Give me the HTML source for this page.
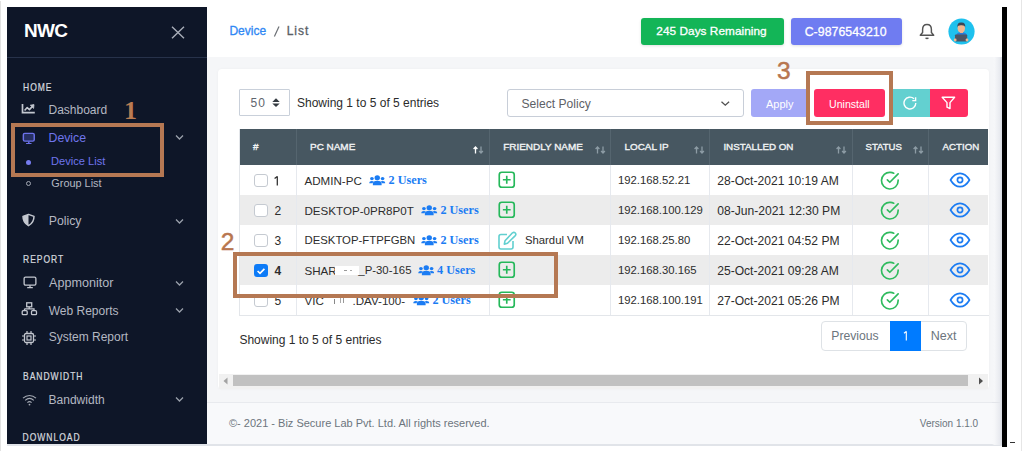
<!DOCTYPE html>
<html><head><meta charset="utf-8">
<style>
*{box-sizing:border-box;margin:0;padding:0}
html,body{width:1024px;height:451px;overflow:hidden;background:#fff;font-family:"Liberation Sans",sans-serif}
.a{position:absolute}
.t{position:absolute;white-space:nowrap;line-height:1}
#edgeL{left:0;top:1px;width:1px;height:450px;background:#e2e2e2}
#edgeR{left:1021px;top:0;width:1px;height:451px;background:#e6e6e6}
#side{left:7px;top:7px;width:200px;height:437px;background:#0e1628}
#hdr{left:207px;top:7px;width:795px;height:50px;background:#fff}
#content{left:207px;top:57px;width:795px;height:345px;background:#f5f6f8}
#foot{left:207px;top:402px;width:795px;height:43px;background:#f8f9fb;border-top:1px solid #e8eaee}
#bar{left:1002px;top:7px;width:5px;height:440px;background:#000}
#dash{left:1010px;top:442px;width:5px;height:1px;background:#333}
.sb{color:#b4b8c2;font-size:12.5px}
.sec{color:#d4d7de;font-size:8.5px;font-weight:normal;letter-spacing:1px;-webkit-text-stroke:0.2px #d4d7de;transform:scaleY(1.2);transform-origin:0 50%}
.brown{border:4.5px solid #b57853}
.btn{position:absolute;border-radius:3px;color:#fff;text-align:center}
.hd{color:#f2f4f5;font-size:10.5px;font-weight:normal;-webkit-text-stroke:0.35px #f2f4f5}
.cell{color:#2d2d2d;font-size:12px}
</style></head><body>
<div class="a" id="edgeL"></div>
<div class="a" id="edgeR"></div>

<!-- SIDEBAR -->
<div class="a" id="side"></div>

<div class="t" style="left:24px;top:20.6px;font-size:19px;font-weight:bold;color:#fff;letter-spacing:-0.7px">NWC</div>
<svg class="a" style="left:170.5px;top:26px" width="14" height="13" viewBox="0 0 14 13"><path d="M1 0.8L13 12.2M13 0.8L1 12.2" stroke="#a9aeb9" stroke-width="1.4" fill="none"/></svg>
<div class="a" style="left:7px;top:56.5px;width:200px;height:1px;background:#27324a"></div>
<div class="t sec" style="left:23px;top:83px">HOME</div>
<svg class="a" style="left:21px;top:102px" width="15" height="13" viewBox="0 0 15 13"><path d="M1.5 2V10.6H13.8" stroke="#c3c7cf" stroke-width="1.7" fill="none"/><path d="M3.6 8.6L6.2 5.6L8.4 7.6L11.2 4.6" stroke="#c3c7cf" stroke-width="1.6" fill="none" stroke-linejoin="round"/><path d="M9.3 3.2L13 2.6L12.6 6.4Z" fill="#c3c7cf" stroke="#c3c7cf" stroke-width="0.8" stroke-linejoin="round"/></svg>
<div class="t sb" style="left:48.5px;top:103.7px;font-size:12px">Dashboard</div>
<div class="t" style="left:124px;top:97.5px;font:bold 26px/1 'Liberation Serif',serif;color:#b97b52">1</div>

<svg class="a" style="left:22.3px;top:131.5px" width="14.5" height="12.8" viewBox="0 0 16 14" preserveAspectRatio="none"><rect x="1.5" y="1.5" width="12" height="8.5" rx="1.5" fill="#273062" stroke="#6c72ea" stroke-width="1.6"/><path d="M7.5 10.5V12.5M4.5 12.8H10.5" stroke="#6c72ea" stroke-width="1.6"/></svg>
<div class="t" style="left:48.5px;top:132.2px;font-size:12.3px;color:#6f75ec">Device</div>
<svg class="a" style="left:175px;top:134px" width="9" height="7" viewBox="0 0 9 7"><path d="M1 1.5L4.5 5L8 1.5" stroke="#9aa0ab" stroke-width="1.3" fill="none"/></svg>
<div class="a" style="left:26px;top:160px;width:5px;height:5px;border-radius:50%;background:#767cf0"></div>
<div class="t" style="left:51px;top:156.2px;font-size:11.1px;color:#6f75ec">Device List</div>
<div class="a" style="left:26px;top:181.4px;width:5px;height:5px;border-radius:50%;border:1px solid #a2a7b2"></div>
<div class="t sb" style="left:51.3px;top:177.8px;font-size:10.9px">Group List</div>

<svg class="a" style="left:21px;top:212.6px" width="15" height="14" viewBox="0 0 15 15" preserveAspectRatio="none"><path d="M7.5 1.5L13 3.6C13 8.5 11.2 11.6 7.5 13.6C3.8 11.6 2 8.5 2 3.6Z" stroke="#c3c7cf" stroke-width="1.5" fill="none" stroke-linejoin="round"/><path d="M7.5 1.5L2 3.6C2 8.5 3.8 11.6 7.5 13.6Z" fill="#c3c7cf"/></svg>
<div class="t sb" style="left:48.7px;top:215px;font-size:12.3px">Policy</div>
<svg class="a" style="left:175px;top:218px" width="9" height="7" viewBox="0 0 9 7"><path d="M1 1.5L4.5 5L8 1.5" stroke="#9aa0ab" stroke-width="1.3" fill="none"/></svg>

<div class="t sec" style="left:23px;top:255.1px">REPORT</div>
<svg class="a" style="left:22.5px;top:275.8px" width="14" height="12.8" viewBox="0 0 15 14" preserveAspectRatio="none"><rect x="1.2" y="1.2" width="12.6" height="8.8" rx="1.5" stroke="#c3c7cf" stroke-width="1.4" fill="none"/><path d="M7.5 10.2V12.5M4.5 12.7H10.5" stroke="#c3c7cf" stroke-width="1.4"/></svg>
<div class="t sb" style="left:49px;top:276.6px;font-size:12.6px">Appmonitor</div>
<svg class="a" style="left:175px;top:280px" width="9" height="7" viewBox="0 0 9 7"><path d="M1 1.5L4.5 5L8 1.5" stroke="#9aa0ab" stroke-width="1.3" fill="none"/></svg>

<svg class="a" style="left:21px;top:302px" width="17" height="14" viewBox="0 0 17 14"><rect x="5.7" y="0.8" width="5" height="4" stroke="#c3c7cf" stroke-width="1.3" fill="none"/><path d="M8.2 4.8V6.8M3.5 6.8H13V8.5M3.5 6.8V8.5" stroke="#c3c7cf" stroke-width="1.3" fill="none"/><rect x="1.2" y="8.7" width="5" height="4" rx="1" stroke="#c3c7cf" stroke-width="1.3" fill="none"/><rect x="10.5" y="8.7" width="5" height="4" rx="1" stroke="#c3c7cf" stroke-width="1.3" fill="none"/></svg>
<div class="t sb" style="left:48.7px;top:304.5px;font-size:12px">Web Reports</div>
<svg class="a" style="left:175px;top:307px" width="9" height="7" viewBox="0 0 9 7"><path d="M1 1.5L4.5 5L8 1.5" stroke="#9aa0ab" stroke-width="1.3" fill="none"/></svg>

<svg class="a" style="left:21px;top:329.5px" width="16" height="16" viewBox="0 0 16 16"><rect x="3.5" y="3.5" width="9" height="9" rx="1.5" stroke="#c3c7cf" stroke-width="1.3" fill="none"/><rect x="6" y="6" width="4" height="4" stroke="#c3c7cf" stroke-width="1.2" fill="none"/><path d="M6 1V3.5M10 1V3.5M6 12.5V15M10 12.5V15M1 6H3.5M1 10H3.5M12.5 6H15M12.5 10H15" stroke="#c3c7cf" stroke-width="1.2"/></svg>
<div class="t sb" style="left:48.7px;top:331px;font-size:12px">System Report</div>

<div class="t sec" style="left:23px;top:371.8px">BANDWIDTH</div>
<svg class="a" style="left:22px;top:393.5px" width="15" height="12" viewBox="0 0 15 12"><path d="M1 4.2C4.8 0.6 10.2 0.6 14 4.2M3.2 6.4C5.8 4 9.2 4 11.8 6.4M5.4 8.6C6.7 7.5 8.3 7.5 9.6 8.6" stroke="#a3a8b2" stroke-width="1.15" fill="none"/><circle cx="7.5" cy="10.6" r="0.9" fill="#a3a8b2"/></svg>
<div class="t sb" style="left:48.6px;top:393.8px;font-size:12px">Bandwidth</div>
<svg class="a" style="left:175px;top:396px" width="9" height="7" viewBox="0 0 9 7"><path d="M1 1.5L4.5 5L8 1.5" stroke="#9aa0ab" stroke-width="1.3" fill="none"/></svg>
<div class="t sec" style="left:22.6px;top:433.3px">DOWNLOAD</div>

<div class="a brown" style="left:10.6px;top:123px;width:153px;height:53.5px"></div>


<!-- HEADER -->
<div class="a" id="hdr"></div>
<div class="a" id="content"></div>
<div class="a" id="foot"></div>

<div class="t" style="left:229.4px;top:25px;font-size:12px;color:#2f88f4;-webkit-text-stroke:0.3px #2f88f4">Device</div>
<svg class="a" style="left:272px;top:25px" width="9" height="13" viewBox="0 0 9 13"><path d="M7 1.6L2.4 11.6" stroke="#6c7075" stroke-width="1.2"/></svg>
<div class="t" style="left:286.7px;top:25px;font-size:12px;color:#5a6066;-webkit-text-stroke:0.3px #5a6066;letter-spacing:1px">List</div>

<div class="btn" style="left:641px;top:18px;width:143px;height:26.5px;background:#13b557;box-shadow:0 1px 3px rgba(0,0,0,.12)"></div>
<div class="t" style="left:656.3px;top:26.2px;font-size:11.8px;color:#fff;-webkit-text-stroke:0.3px #fff;letter-spacing:0.05px">245 Days Remaining</div>
<div class="btn" style="left:791px;top:18px;width:111px;height:26.5px;background:#6f7cf1;box-shadow:0 1px 3px rgba(0,0,0,.12)"></div>
<div class="t" style="left:804.7px;top:26px;font-size:12.3px;color:#fff;-webkit-text-stroke:0.3px #fff;letter-spacing:0.3px;letter-spacing:0.05px">C-9876543210</div>

<svg class="a" style="left:918px;top:22px" width="18" height="19" viewBox="0 0 18 19"><path d="M2.3 13.2L4.6 10.6V7.6C4.6 4.4 6.4 2.4 9 2.4C11.6 2.4 13.4 4.4 13.4 7.6V10.6L15.7 13.2Z" stroke="#555" stroke-width="1.45" fill="none" stroke-linejoin="round"/><path d="M7.6 15.8Q9 17.3 10.4 15.8" stroke="#555" stroke-width="1.4" fill="none"/></svg>
<svg class="a" style="left:947.5px;top:18.3px" width="27" height="27" viewBox="0 0 27 27">
<defs><clipPath id="cc"><circle cx="13.5" cy="13.5" r="13.1"/></clipPath></defs>
<circle cx="13.5" cy="13.5" r="13.1" fill="#1ec1ee"/>
<g clip-path="url(#cc)">
<path d="M8 18Q8 14.5 13.5 14.2Q19 14.5 19 18V20H8Z" fill="#2a7bd6"/>
<rect x="11.9" y="12" width="3.2" height="3" fill="#eeb08a"/>
<ellipse cx="13.3" cy="10.2" rx="3.7" ry="4.2" fill="#f2b890"/>
<path d="M9.4 9.5Q8.8 4.2 13.3 4.4Q17.8 4.2 17.2 9.5Q16.8 7 13.3 7.2Q9.8 7 9.4 9.5Z" fill="#3b4656"/>
<rect x="7" y="16.5" width="12.2" height="7" rx="0.8" fill="#4b5665"/>
<circle cx="7.2" cy="22" r="1.4" fill="#f2b890"/><circle cx="19" cy="22" r="1.4" fill="#f2b890"/>
</g></svg>

<!-- card -->
<div class="a" style="left:218px;top:68.5px;width:771px;height:320.5px;background:#fff;border-radius:4px;box-shadow:0 0 3px rgba(0,0,0,0.04)"></div>
<div class="t" style="left:777px;top:58.5px;font-size:24.5px;color:#b87650;-webkit-text-stroke:0.5px #b87650">3</div>

<div class="a" style="left:239px;top:89px;width:51px;height:27px;border:1.3px solid #c9d0da;border-radius:1px"></div>
<div class="t" style="left:250.5px;top:96.9px;font-size:12px;color:#5f666e;letter-spacing:1.2px">50</div>
<svg class="a" style="left:271.5px;top:98px" width="8" height="10" viewBox="0 0 8 10"><path d="M0.3 3.9L4 0.2L7.7 3.9Z" fill="#343a40"/><path d="M0.3 5.4L4 9.1L7.7 5.4Z" fill="#343a40"/></svg>
<div class="t" style="left:297px;top:96.7px;font-size:12px;color:#2b2b2b">Showing 1 to 5 of 5 entries</div>

<div class="a" style="left:507px;top:89px;width:237px;height:28px;border:1px solid #c8ced8;border-radius:3px"></div>
<div class="t" style="left:521.5px;top:97.5px;font-size:12.1px;color:#5d6166">Select Policy</div>
<svg class="a" style="left:720px;top:100px" width="11" height="7" viewBox="0 0 11 7"><path d="M1.5 1.8L5.3 5.2L9.1 1.8" stroke="#505050" stroke-width="1.3" fill="none"/></svg>

<div class="btn" style="left:751px;top:89px;width:58px;height:28px;background:#a3a8f7"></div>
<div class="t" style="left:766px;top:99.1px;font-size:11px;color:#fff">Apply</div>
<div class="btn" style="left:814px;top:89px;width:70.5px;height:28px;background:#ff2e62"></div>
<div class="t" style="left:829px;top:98.9px;font-size:10.6px;color:#fff">Uninstall</div>
<div class="a" style="left:892.6px;top:89px;width:37.4px;height:28px;background:#63d0d0"></div>
<div class="a" style="left:930px;top:89px;width:38px;height:28px;background:#ff2e62;border-radius:0 3px 3px 0"></div>
<svg class="a" style="left:903px;top:96px" width="15" height="14" viewBox="0 0 15 14"><path d="M12.8 7A5.9 5.9 0 1 1 11 2.8" stroke="#fff" stroke-width="1.4" fill="none"/><path d="M12.6 1.3V4.6H9.3" stroke="#fff" stroke-width="1.4" fill="none"/></svg>
<svg class="a" style="left:941px;top:96px" width="15" height="14" viewBox="0 0 15 14"><path d="M1.2 1.3H13.6L9 6.6V12.6L6 11.2V6.6Z" stroke="#fff" stroke-width="1.4" fill="none" stroke-linejoin="round"/></svg>
<div class="a brown" style="left:806px;top:71px;width:87px;height:54px"></div>


<div class="a" style="left:239.5px;top:129px;width:748.8px;height:35.5px;background:#475761"></div>
<div class="a" style="left:295.8px;top:129px;width:1px;height:35.5px;background:#55656f"></div>
<div class="a" style="left:488.8px;top:129px;width:1px;height:35.5px;background:#55656f"></div>
<div class="a" style="left:610.1px;top:129px;width:1px;height:35.5px;background:#55656f"></div>
<div class="a" style="left:709.1px;top:129px;width:1px;height:35.5px;background:#55656f"></div>
<div class="a" style="left:851.9px;top:129px;width:1px;height:35.5px;background:#55656f"></div>
<div class="a" style="left:928.0px;top:129px;width:1px;height:35.5px;background:#55656f"></div>
<div class="a" style="left:239.5px;top:164.5px;width:748.8px;height:30.0px;background:#fff"></div>
<div class="a" style="left:239.5px;top:194.5px;width:748.8px;height:30.0px;background:#ececec"></div>
<div class="a" style="left:239.5px;top:224.5px;width:748.8px;height:30.0px;background:#fff"></div>
<div class="a" style="left:239.5px;top:254.5px;width:748.8px;height:30.0px;background:#ececec"></div>
<div class="a" style="left:239.5px;top:284.5px;width:748.8px;height:30.0px;background:#fff"></div>
<div class="a" style="left:295.8px;top:164.5px;width:1px;height:150px;background:#e6e9ee"></div>
<div class="a" style="left:488.8px;top:164.5px;width:1px;height:150px;background:#e6e9ee"></div>
<div class="a" style="left:610.1px;top:164.5px;width:1px;height:150px;background:#e6e9ee"></div>
<div class="a" style="left:709.1px;top:164.5px;width:1px;height:150px;background:#e6e9ee"></div>
<div class="a" style="left:851.9px;top:164.5px;width:1px;height:150px;background:#e6e9ee"></div>
<div class="a" style="left:928.0px;top:164.5px;width:1px;height:150px;background:#e6e9ee"></div>
<div class="a" style="left:239px;top:129px;width:1px;height:186px;background:#e3e6ea"></div>
<div class="a" style="left:239px;top:314.5px;width:750px;height:1px;background:#e3e6ea"></div>
<div class="t hd" style="left:253px;top:141.8px;font-size:9.9px">#</div>
<div class="t hd" style="left:310px;top:141.8px;font-size:9.95px">PC NAME</div>
<div class="t hd" style="left:503.2px;top:141.8px;font-size:9.95px">FRIENDLY NAME</div>
<div class="t hd" style="left:624.5px;top:141.8px;font-size:9.9px">LOCAL IP</div>
<div class="t hd" style="left:723.4px;top:141.8px;font-size:9.8px">INSTALLED ON</div>
<div class="t hd" style="left:865.5px;top:141.8px;font-size:9.6px">STATUS</div>
<div class="t hd" style="left:942.6px;top:141.8px;font-size:9.7px">ACTION</div>
<svg class="a" style="left:473.3px;top:145.5px" width="11" height="8" viewBox="0 0 11 8"><path d="M2.5 7.5V1M0.6 3L2.5 1L4.4 3" stroke="#ffffff" stroke-width="1.3" fill="none"/><path d="M8 0.5V7M6.1 5L8 7L9.9 5" stroke="#8d9ca5" stroke-width="1.3" fill="none"/></svg>
<svg class="a" style="left:594.7px;top:145.5px" width="11" height="8" viewBox="0 0 11 8"><path d="M2.5 7.5V1M0.6 3L2.5 1L4.4 3" stroke="#8d9ca5" stroke-width="1.3" fill="none"/><path d="M8 0.5V7M6.1 5L8 7L9.9 5" stroke="#8d9ca5" stroke-width="1.3" fill="none"/></svg>
<svg class="a" style="left:693.6px;top:145.5px" width="11" height="8" viewBox="0 0 11 8"><path d="M2.5 7.5V1M0.6 3L2.5 1L4.4 3" stroke="#8d9ca5" stroke-width="1.3" fill="none"/><path d="M8 0.5V7M6.1 5L8 7L9.9 5" stroke="#8d9ca5" stroke-width="1.3" fill="none"/></svg>
<svg class="a" style="left:836px;top:145.5px" width="11" height="8" viewBox="0 0 11 8"><path d="M2.5 7.5V1M0.6 3L2.5 1L4.4 3" stroke="#8d9ca5" stroke-width="1.3" fill="none"/><path d="M8 0.5V7M6.1 5L8 7L9.9 5" stroke="#8d9ca5" stroke-width="1.3" fill="none"/></svg>
<svg class="a" style="left:913.3px;top:145.5px" width="11" height="8" viewBox="0 0 11 8"><path d="M2.5 7.5V1M0.6 3L2.5 1L4.4 3" stroke="#8d9ca5" stroke-width="1.3" fill="none"/><path d="M8 0.5V7M6.1 5L8 7L9.9 5" stroke="#8d9ca5" stroke-width="1.3" fill="none"/></svg>
<div class="a" style="left:254px;top:173.5px;width:13.5px;height:13.5px;border-radius:3px;border:1px solid #c5cad1;background:#fff"></div>
<svg class="a" style="left:273px;top:175px" width="7" height="12" viewBox="0 0 7 12"><path d="M4.3 1.3V10.4M1.6 3.6L4.3 1.5" stroke="#2d2d2d" stroke-width="1.25" fill="none"/></svg>
<div class="t cell" style="left:304.5px;top:174.88px;font-size:11.6px">ADMIN-PC</div>
<svg class="a" style="left:369.2px;top:175.0px" width="16.5" height="10.8" viewBox="0 0 17 12" preserveAspectRatio="none"><circle cx="8.5" cy="3" r="2.8" fill="#1b7cf3"/><circle cx="3" cy="4" r="1.9" fill="#1b7cf3"/><circle cx="14" cy="4" r="1.9" fill="#1b7cf3"/><path d="M4 11.5V9.5Q4 6.5 8.5 6.5Q13 6.5 13 9.5V11.5Z" fill="#1b7cf3"/><path d="M0.3 9.2Q0.3 6.6 3 6.6Q4.3 6.6 5 7.3Q3.7 8.3 3.6 9.2Z" fill="#1b7cf3"/><path d="M16.7 9.2Q16.7 6.6 14 6.6Q12.7 6.6 12 7.3Q13.3 8.3 13.4 9.2Z" fill="#1b7cf3"/></svg>
<div class="t" style="left:388.59999999999997px;top:174.20px;font:bold 12.2px/1 'Liberation Serif',serif;color:#1b7cf3">2 Users</div>
<svg class="a" style="left:498.3px;top:171.20px" width="17.5" height="17.5" viewBox="0 0 18 18"><rect x="1.3" y="1.3" width="15.4" height="15.4" rx="2.6" stroke="#25b85a" stroke-width="1.7" fill="none"/><path d="M9 5V13M5 9H13" stroke="#25b85a" stroke-width="1.7"/></svg>
<div class="t cell" style="left:618px;top:174.88px;font-size:11.3px">192.168.52.21</div>
<div class="t cell" style="left:717.2px;top:174.88px;font-size:12.1px">28-Oct-2021 10:19 AM</div>
<svg class="a" style="left:880.3px;top:170.70px" width="20.6" height="19.6" viewBox="0 0 21 20"><path d="M18.5 9.3V10Q18.5 13.6 15.9 16.1Q13.4 18.5 9.8 18.4Q6.2 18.2 3.8 15.6Q1.4 12.9 1.5 9.4Q1.7 5.8 4.4 3.4Q7.2 1 10.7 1.4Q12.5 1.6 14 2.3" stroke="#2fbb5e" stroke-width="1.7" fill="none" stroke-linecap="round"/><path d="M18.5 3L10 11.5L7.5 9" stroke="#2fbb5e" stroke-width="1.7" fill="none" stroke-linecap="round" stroke-linejoin="round"/></svg>
<svg class="a" style="left:949px;top:172.0px" width="22" height="16" viewBox="0 0 22 16"><path d="M1.5 8Q5.5 1.3 11 1.3Q16.5 1.3 20.5 8Q16.5 14.7 11 14.7Q5.5 14.7 1.5 8Z" stroke="#1b7cf3" stroke-width="1.7" fill="none" stroke-linejoin="round"/><circle cx="11" cy="8" r="2.6" stroke="#1b7cf3" stroke-width="1.7" fill="none"/></svg>
<div class="a" style="left:254px;top:203.5px;width:13.5px;height:13.5px;border-radius:3px;border:1px solid #c5cad1;background:#fff"></div>
<div class="t cell" style="left:274.5px;top:204.88px;font-size:12px;">2</div>
<div class="t cell" style="left:304.5px;top:204.88px;font-size:11.6px">DESKTOP-0PR8P0T</div>
<svg class="a" style="left:421px;top:205.0px" width="16.5" height="10.8" viewBox="0 0 17 12" preserveAspectRatio="none"><circle cx="8.5" cy="3" r="2.8" fill="#1b7cf3"/><circle cx="3" cy="4" r="1.9" fill="#1b7cf3"/><circle cx="14" cy="4" r="1.9" fill="#1b7cf3"/><path d="M4 11.5V9.5Q4 6.5 8.5 6.5Q13 6.5 13 9.5V11.5Z" fill="#1b7cf3"/><path d="M0.3 9.2Q0.3 6.6 3 6.6Q4.3 6.6 5 7.3Q3.7 8.3 3.6 9.2Z" fill="#1b7cf3"/><path d="M16.7 9.2Q16.7 6.6 14 6.6Q12.7 6.6 12 7.3Q13.3 8.3 13.4 9.2Z" fill="#1b7cf3"/></svg>
<div class="t" style="left:440.4px;top:204.20px;font:bold 12.2px/1 'Liberation Serif',serif;color:#1b7cf3">2 Users</div>
<svg class="a" style="left:498.3px;top:201.20px" width="17.5" height="17.5" viewBox="0 0 18 18"><rect x="1.3" y="1.3" width="15.4" height="15.4" rx="2.6" stroke="#25b85a" stroke-width="1.7" fill="none"/><path d="M9 5V13M5 9H13" stroke="#25b85a" stroke-width="1.7"/></svg>
<div class="t cell" style="left:618px;top:204.88px;font-size:11.3px">192.168.100.129</div>
<div class="t cell" style="left:717.2px;top:204.88px;font-size:12.1px">08-Jun-2021 12:30 PM</div>
<svg class="a" style="left:880.3px;top:200.70px" width="20.6" height="19.6" viewBox="0 0 21 20"><path d="M18.5 9.3V10Q18.5 13.6 15.9 16.1Q13.4 18.5 9.8 18.4Q6.2 18.2 3.8 15.6Q1.4 12.9 1.5 9.4Q1.7 5.8 4.4 3.4Q7.2 1 10.7 1.4Q12.5 1.6 14 2.3" stroke="#2fbb5e" stroke-width="1.7" fill="none" stroke-linecap="round"/><path d="M18.5 3L10 11.5L7.5 9" stroke="#2fbb5e" stroke-width="1.7" fill="none" stroke-linecap="round" stroke-linejoin="round"/></svg>
<svg class="a" style="left:949px;top:202.0px" width="22" height="16" viewBox="0 0 22 16"><path d="M1.5 8Q5.5 1.3 11 1.3Q16.5 1.3 20.5 8Q16.5 14.7 11 14.7Q5.5 14.7 1.5 8Z" stroke="#1b7cf3" stroke-width="1.7" fill="none" stroke-linejoin="round"/><circle cx="11" cy="8" r="2.6" stroke="#1b7cf3" stroke-width="1.7" fill="none"/></svg>
<div class="a" style="left:254px;top:233.5px;width:13.5px;height:13.5px;border-radius:3px;border:1px solid #c5cad1;background:#fff"></div>
<div class="t cell" style="left:274.5px;top:234.88px;font-size:12px;">3</div>
<div class="t cell" style="left:304.5px;top:234.88px;font-size:11.35px">DESKTOP-FTPFGBN</div>
<svg class="a" style="left:421px;top:235.0px" width="16.5" height="10.8" viewBox="0 0 17 12" preserveAspectRatio="none"><circle cx="8.5" cy="3" r="2.8" fill="#1b7cf3"/><circle cx="3" cy="4" r="1.9" fill="#1b7cf3"/><circle cx="14" cy="4" r="1.9" fill="#1b7cf3"/><path d="M4 11.5V9.5Q4 6.5 8.5 6.5Q13 6.5 13 9.5V11.5Z" fill="#1b7cf3"/><path d="M0.3 9.2Q0.3 6.6 3 6.6Q4.3 6.6 5 7.3Q3.7 8.3 3.6 9.2Z" fill="#1b7cf3"/><path d="M16.7 9.2Q16.7 6.6 14 6.6Q12.7 6.6 12 7.3Q13.3 8.3 13.4 9.2Z" fill="#1b7cf3"/></svg>
<div class="t" style="left:440.4px;top:234.20px;font:bold 12.2px/1 'Liberation Serif',serif;color:#1b7cf3">2 Users</div>
<svg class="a" style="left:497px;top:230.5px" width="21" height="20" viewBox="0 0 21 20"><path d="M10 3.5H4Q2 3.5 2 5.5V16Q2 18 4 18H14Q16 18 16 16V10" stroke="#62d0d0" stroke-width="1.6" fill="none"/><path d="M15.5 1.8Q17 0.8 18.3 2Q19.4 3.2 18.3 4.6L10.5 12.3L7.3 13.1L8 9.8Z" stroke="#62d0d0" stroke-width="1.6" fill="none" stroke-linejoin="round"/></svg>
<div class="t cell" style="left:525px;top:234.88px;font-size:11.3px">Shardul VM</div>
<div class="t cell" style="left:618px;top:234.88px;font-size:11.3px">192.168.25.80</div>
<div class="t cell" style="left:717.2px;top:234.88px;font-size:12.1px">22-Oct-2021 04:52 PM</div>
<svg class="a" style="left:880.3px;top:230.70px" width="20.6" height="19.6" viewBox="0 0 21 20"><path d="M18.5 9.3V10Q18.5 13.6 15.9 16.1Q13.4 18.5 9.8 18.4Q6.2 18.2 3.8 15.6Q1.4 12.9 1.5 9.4Q1.7 5.8 4.4 3.4Q7.2 1 10.7 1.4Q12.5 1.6 14 2.3" stroke="#2fbb5e" stroke-width="1.7" fill="none" stroke-linecap="round"/><path d="M18.5 3L10 11.5L7.5 9" stroke="#2fbb5e" stroke-width="1.7" fill="none" stroke-linecap="round" stroke-linejoin="round"/></svg>
<svg class="a" style="left:949px;top:232.0px" width="22" height="16" viewBox="0 0 22 16"><path d="M1.5 8Q5.5 1.3 11 1.3Q16.5 1.3 20.5 8Q16.5 14.7 11 14.7Q5.5 14.7 1.5 8Z" stroke="#1b7cf3" stroke-width="1.7" fill="none" stroke-linejoin="round"/><circle cx="11" cy="8" r="2.6" stroke="#1b7cf3" stroke-width="1.7" fill="none"/></svg>
<div class="a" style="left:254px;top:263.5px;width:13.5px;height:13.5px;border-radius:3px;background:#0d7bf7"></div><svg class="a" style="left:254px;top:263.5px" width="14" height="14" viewBox="0 0 14 14"><path d="M3.6 7L6 9.3L10.4 4.8" stroke="#fff" stroke-width="1.7" fill="none"/></svg>
<div class="t cell" style="left:274.5px;top:264.88px;font-size:12px;font-weight:bold;">4</div>
<div class="t cell" style="left:304.5px;top:264.88px;font-size:11.6px">SHARL</div><div class="t cell" style="left:358.3px;top:264.88px;font-size:11.4px">_P-30-165</div>
<div class="a" style="left:334.5px;top:265.5px;width:24px;height:9px;background:#fff"></div><div class="a" style="left:344px;top:270px;width:3px;height:1px;background:#999"></div><div class="a" style="left:350px;top:270px;width:2px;height:1px;background:#aaa"></div>
<svg class="a" style="left:417.7px;top:265.0px" width="16.5" height="10.8" viewBox="0 0 17 12" preserveAspectRatio="none"><circle cx="8.5" cy="3" r="2.8" fill="#1b7cf3"/><circle cx="3" cy="4" r="1.9" fill="#1b7cf3"/><circle cx="14" cy="4" r="1.9" fill="#1b7cf3"/><path d="M4 11.5V9.5Q4 6.5 8.5 6.5Q13 6.5 13 9.5V11.5Z" fill="#1b7cf3"/><path d="M0.3 9.2Q0.3 6.6 3 6.6Q4.3 6.6 5 7.3Q3.7 8.3 3.6 9.2Z" fill="#1b7cf3"/><path d="M16.7 9.2Q16.7 6.6 14 6.6Q12.7 6.6 12 7.3Q13.3 8.3 13.4 9.2Z" fill="#1b7cf3"/></svg>
<div class="t" style="left:437.09999999999997px;top:264.20px;font:bold 12.2px/1 'Liberation Serif',serif;color:#1b7cf3">4 Users</div>
<svg class="a" style="left:498.3px;top:261.20px" width="17.5" height="17.5" viewBox="0 0 18 18"><rect x="1.3" y="1.3" width="15.4" height="15.4" rx="2.6" stroke="#25b85a" stroke-width="1.7" fill="none"/><path d="M9 5V13M5 9H13" stroke="#25b85a" stroke-width="1.7"/></svg>
<div class="t cell" style="left:618px;top:264.88px;font-size:11.3px">192.168.30.165</div>
<div class="t cell" style="left:717.2px;top:264.88px;font-size:12.1px">25-Oct-2021 09:28 AM</div>
<svg class="a" style="left:880.3px;top:260.70px" width="20.6" height="19.6" viewBox="0 0 21 20"><path d="M18.5 9.3V10Q18.5 13.6 15.9 16.1Q13.4 18.5 9.8 18.4Q6.2 18.2 3.8 15.6Q1.4 12.9 1.5 9.4Q1.7 5.8 4.4 3.4Q7.2 1 10.7 1.4Q12.5 1.6 14 2.3" stroke="#2fbb5e" stroke-width="1.7" fill="none" stroke-linecap="round"/><path d="M18.5 3L10 11.5L7.5 9" stroke="#2fbb5e" stroke-width="1.7" fill="none" stroke-linecap="round" stroke-linejoin="round"/></svg>
<svg class="a" style="left:949px;top:262.0px" width="22" height="16" viewBox="0 0 22 16"><path d="M1.5 8Q5.5 1.3 11 1.3Q16.5 1.3 20.5 8Q16.5 14.7 11 14.7Q5.5 14.7 1.5 8Z" stroke="#1b7cf3" stroke-width="1.7" fill="none" stroke-linejoin="round"/><circle cx="11" cy="8" r="2.6" stroke="#1b7cf3" stroke-width="1.7" fill="none"/></svg>
<div class="a" style="left:254px;top:293.5px;width:13.5px;height:13.5px;border-radius:3px;border:1px solid #c5cad1;background:#fff"></div>
<div class="t cell" style="left:274.5px;top:294.88px;font-size:12px;">5</div>
<div class="t cell" style="left:304.5px;top:294.88px;font-size:11.6px">VICT</div><div class="t cell" style="left:352.5px;top:294.88px;font-size:11.6px">.DAV-100-</div>
<div class="a" style="left:325px;top:295px;width:27px;height:10px;background:#fff"></div><div class="a" style="left:334px;top:299px;width:1px;height:5px;background:#888"></div><div class="a" style="left:340px;top:297px;width:4px;height:6px;border-left:1px solid #aaa;border-right:1px solid #999"></div>
<svg class="a" style="left:413px;top:295.0px" width="16.5" height="10.8" viewBox="0 0 17 12" preserveAspectRatio="none"><circle cx="8.5" cy="3" r="2.8" fill="#1b7cf3"/><circle cx="3" cy="4" r="1.9" fill="#1b7cf3"/><circle cx="14" cy="4" r="1.9" fill="#1b7cf3"/><path d="M4 11.5V9.5Q4 6.5 8.5 6.5Q13 6.5 13 9.5V11.5Z" fill="#1b7cf3"/><path d="M0.3 9.2Q0.3 6.6 3 6.6Q4.3 6.6 5 7.3Q3.7 8.3 3.6 9.2Z" fill="#1b7cf3"/><path d="M16.7 9.2Q16.7 6.6 14 6.6Q12.7 6.6 12 7.3Q13.3 8.3 13.4 9.2Z" fill="#1b7cf3"/></svg>
<div class="t" style="left:432.4px;top:294.20px;font:bold 12.2px/1 'Liberation Serif',serif;color:#1b7cf3">2 Users</div>
<svg class="a" style="left:498.3px;top:291.20px" width="17.5" height="17.5" viewBox="0 0 18 18"><rect x="1.3" y="1.3" width="15.4" height="15.4" rx="2.6" stroke="#25b85a" stroke-width="1.7" fill="none"/><path d="M9 5V13M5 9H13" stroke="#25b85a" stroke-width="1.7"/></svg>
<div class="t cell" style="left:618px;top:294.88px;font-size:11.3px">192.168.100.191</div>
<div class="t cell" style="left:717.2px;top:294.88px;font-size:12.1px">27-Oct-2021 05:26 PM</div>
<svg class="a" style="left:880.3px;top:290.70px" width="20.6" height="19.6" viewBox="0 0 21 20"><path d="M18.5 9.3V10Q18.5 13.6 15.9 16.1Q13.4 18.5 9.8 18.4Q6.2 18.2 3.8 15.6Q1.4 12.9 1.5 9.4Q1.7 5.8 4.4 3.4Q7.2 1 10.7 1.4Q12.5 1.6 14 2.3" stroke="#2fbb5e" stroke-width="1.7" fill="none" stroke-linecap="round"/><path d="M18.5 3L10 11.5L7.5 9" stroke="#2fbb5e" stroke-width="1.7" fill="none" stroke-linecap="round" stroke-linejoin="round"/></svg>
<svg class="a" style="left:949px;top:292.0px" width="22" height="16" viewBox="0 0 22 16"><path d="M1.5 8Q5.5 1.3 11 1.3Q16.5 1.3 20.5 8Q16.5 14.7 11 14.7Q5.5 14.7 1.5 8Z" stroke="#1b7cf3" stroke-width="1.7" fill="none" stroke-linejoin="round"/><circle cx="11" cy="8" r="2.6" stroke="#1b7cf3" stroke-width="1.7" fill="none"/></svg>
<div class="a brown" style="left:233.3px;top:252.4px;width:324.5px;height:45.9px"></div>
<div class="t" style="left:220.8px;top:229.5px;font-size:24.5px;color:#b87650;-webkit-text-stroke:0.5px #b87650">2</div>
<div class="t" style="left:239.4px;top:333.8px;font-size:12px;color:#2b2b2b">Showing 1 to 5 of 5 entries</div>
<div class="a" style="left:820.6px;top:321.4px;width:146.7px;height:29.5px;border:1px solid #dee2e6;border-radius:4px;background:#fff"></div>
<div class="a" style="left:889.8px;top:321.4px;width:30.8px;height:29.5px;background:#007bff"></div>
<div class="t" style="left:831.3px;top:330px;font-size:12.2px;color:#6c757d">Previous</div>
<svg class="a" style="left:901.5px;top:330px" width="7" height="12" viewBox="0 0 7 12"><path d="M4.3 1.3V10.4M2 3.3L4.3 1.5" stroke="#fff" stroke-width="1.1" fill="none"/></svg>
<div class="t" style="left:930.7px;top:330px;font-size:12.5px;color:#6c757d">Next</div>
<div class="a" style="left:219px;top:373.5px;width:769px;height:15px;background:#f1f1f1"></div>
<div class="a" style="left:233px;top:375px;width:734.7px;height:11px;background:#c1c1c1"></div>
<svg class="a" style="left:223px;top:377px" width="6" height="8" viewBox="0 0 6 8"><path d="M4.5 0.5V7.5L0.5 4Z" fill="#a3a3a3"/></svg>
<svg class="a" style="left:978px;top:377px" width="6" height="8" viewBox="0 0 6 8"><path d="M1 0.5V7.5L5 4Z" fill="#505050"/></svg>
<div class="t" style="left:229px;top:417.5px;font-size:11px;color:#6c757d">©- 2021 - Biz Secure Lab Pvt. Ltd. All rights reserved.</div>
<div class="t" style="left:919.8px;top:419.3px;font-size:10px;color:#6c757d">Version 1.1.0</div>
<div class="a" style="left:7px;top:444.3px;width:995px;height:2px;background:#e1e4e9"></div>
<div class="a" style="left:992px;top:57px;width:10.2px;height:388px;background:linear-gradient(to right,rgba(243,244,247,0),rgba(246,247,249,.9) 25%,#e9ebf0 75%,#d6d9e0)"></div>
<div class="a" style="left:992px;top:402px;width:9px;height:1px;background:#e3e5ea"></div>
<div class="a" id="bar"></div>
<div class="a" id="dash"></div>
</body></html>
